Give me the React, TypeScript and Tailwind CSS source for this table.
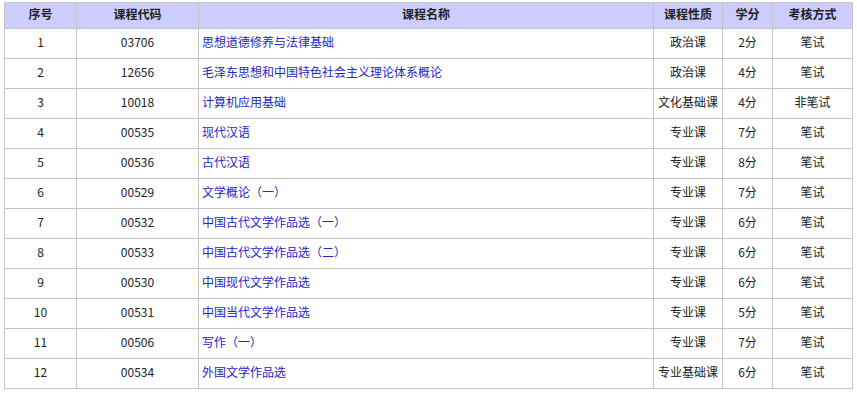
import React from 'react';

type Course = {
  code: string;
  name: string;
  kind: string;
  credit: string;
  exam: string;
};

const courses: Course[] = [
  { code: '03706', name: '思想道德修养与法律基础', kind: '政治课', credit: '2分', exam: '笔试' },
  { code: '12656', name: '毛泽东思想和中国特色社会主义理论体系概论', kind: '政治课', credit: '4分', exam: '笔试' },
  { code: '10018', name: '计算机应用基础', kind: '文化基础课', credit: '4分', exam: '非笔试' },
  { code: '00535', name: '现代汉语', kind: '专业课', credit: '7分', exam: '笔试' },
  { code: '00536', name: '古代汉语', kind: '专业课', credit: '8分', exam: '笔试' },
  { code: '00529', name: '文学概论（一）', kind: '专业课', credit: '7分', exam: '笔试' },
  { code: '00532', name: '中国古代文学作品选（一）', kind: '专业课', credit: '6分', exam: '笔试' },
  { code: '00533', name: '中国古代文学作品选（二）', kind: '专业课', credit: '6分', exam: '笔试' },
  { code: '00530', name: '中国现代文学作品选', kind: '专业课', credit: '6分', exam: '笔试' },
  { code: '00531', name: '中国当代文学作品选', kind: '专业课', credit: '5分', exam: '笔试' },
  { code: '00506', name: '写作（一）', kind: '专业课', credit: '7分', exam: '笔试' },
  { code: '00534', name: '外国文学作品选', kind: '专业基础课', credit: '6分', exam: '笔试' },
];

const th = 'border border-[#c4c4c4] font-bold text-center p-0 pb-[3px]';
const td = 'border border-[#c4c4c4] text-center p-0 pb-[3px]';

const App: React.FC = () => {
  return (
    <div
      className="bg-white w-[857px] h-[393px] overflow-hidden pt-[2px] pl-[4px] text-[12px] leading-[16px] text-[#222]"
      style={{ fontFamily: '"Microsoft YaHei", "Noto Sans CJK SC", "Noto Sans", sans-serif' }}
    >
      <table className="border-collapse table-fixed w-[848px]">
        <colgroup>
          <col className="w-[72px]" />
          <col className="w-[122px]" />
          <col className="w-[455px]" />
          <col className="w-[69px]" />
          <col className="w-[50px]" />
          <col className="w-[80px]" />
        </colgroup>
        <thead>
          <tr className="h-[26px] bg-[#ccccff]">
            <th className={th}>序号</th>
            <th className={th}>课程代码</th>
            <th className={th}>课程名称</th>
            <th className={th}>课程性质</th>
            <th className={th}>学分</th>
            <th className={th}>考核方式</th>
          </tr>
        </thead>
        <tbody>
          {courses.map((c, i) => (
            <tr key={c.code} className="h-[30px]">
              <td className={td}>{i + 1}</td>
              <td className={td}>{c.code}</td>
              <td className="border border-[#c4c4c4] text-left p-0 pb-[3px] pl-[3px] text-[#2525c8]">{c.name}</td>
              <td className={td}>{c.kind}</td>
              <td className={td}>{c.credit}</td>
              <td className={td}>{c.exam}</td>
            </tr>
          ))}
        </tbody>
      </table>
    </div>
  );
};

export default App;
